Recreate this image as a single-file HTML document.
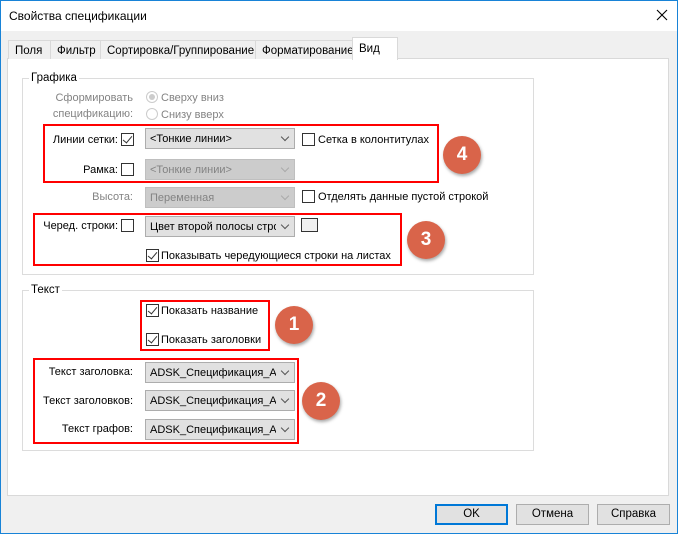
<!DOCTYPE html>
<html><head><meta charset="utf-8"><style>
*{box-sizing:border-box;margin:0;padding:0}
body{width:678px;height:534px;position:relative;overflow:hidden;background:#f0f0f0;font-family:"Liberation Sans",sans-serif;font-size:11px;line-height:16px;color:#000}
div{white-space:nowrap}
.a{position:absolute}
.r{text-align:right}
.cb{position:absolute;width:13px;height:13px;border:1px solid #333;background:#fff}
.cb.k::after{content:"";position:absolute;left:3px;top:0px;width:4px;height:8px;border:solid #333;border-width:0 1.5px 1.5px 0;transform:rotate(40deg)}
.combo{position:absolute;width:150px;height:21px;background:#e1e1e1;border:1px solid #adadad;padding:2px 0 0 4px;overflow:hidden}
.combo span{display:block;width:126px;overflow:hidden}
.combo::after{content:"";position:absolute;right:6px;top:5px;width:5px;height:5px;border:solid #555;border-width:0 1px 1px 0;transform:rotate(45deg)}
.combo.d{background:#ccc;border-color:#bfbfbf;color:#838383}
.combo.d::after{border-color:#aaa}
.red{position:absolute;border:2px solid #f00}
.circ{position:absolute;width:38px;height:38px;border-radius:50%;background:#d9644a;color:#fff;font-weight:bold;font-size:19px;text-align:center;line-height:38px;box-shadow:1px 2px 3px rgba(0,0,0,.35)}
.grp{position:absolute;border:1px solid #dcdcdc}
.gl{position:absolute;background:#fff;padding:0 2px}
.btn{position:absolute;height:21px;background:#e1e1e1;border:1px solid #adadad;text-align:center;line-height:19px;font-size:11.5px}
.tab{position:absolute;top:40px;height:19px;border:1px solid #d9d9d9;border-bottom:none;background:#f0f0f0;padding:2px 0 0 6px;font-size:11.5px}
.gray{color:#838383}
</style></head><body>
<div class="a" style="left:0;top:0;width:678px;height:31px;background:#fff"></div>
<div class="a" style="left:9px;top:8px;font-size:12px">Свойства спецификации</div>
<svg class="a" style="left:656px;top:9px" width="12" height="12"><path d="M1 1L11 11M11 1L1 11" stroke="#000" stroke-width="1.1"/></svg>
<div class="a" style="left:7px;top:58px;width:662px;height:438px;background:#fff;border:1px solid #d9d9d9"></div>
<div class="tab" style="left:8px;width:43px">Поля</div>
<div class="tab" style="left:50px;width:51px">Фильтр</div>
<div class="tab" style="left:100px;width:156px">Сортировка/Группирование</div>
<div class="tab" style="left:255px;width:98px">Форматирование</div>
<div class="tab" style="left:352px;top:37px;height:23px;width:46px;background:#fff;padding-top:3px">Вид</div>

<div class="grp" style="left:22px;top:78px;width:512px;height:197px"></div>
<div class="gl" style="left:29px;top:70px;font-size:11.5px">Графика</div>
<div class="a r gray" style="left:40px;width:93px;top:90px;line-height:16px">Сформировать<br>спецификацию:</div>
<div class="a" style="left:146px;top:91px;width:12px;height:12px;border-radius:50%;border:1px solid #ccc;background:#fff"><div style="position:absolute;left:2px;top:2px;width:6px;height:6px;border-radius:50%;background:#ccc"></div></div>
<div class="a gray" style="left:161px;top:90px">Сверху вниз</div>
<div class="a" style="left:146px;top:108px;width:12px;height:12px;border-radius:50%;border:1px solid #ccc;background:#fff"></div>
<div class="a gray" style="left:161px;top:107px">Снизу вверх</div>

<div class="a r" style="left:30px;width:88px;top:132px">Линии сетки:</div>
<div class="cb k" style="left:121px;top:133px"></div>
<div class="combo" style="left:145px;top:128px"><span>&lt;Тонкие линии&gt;</span></div>
<div class="cb" style="left:302px;top:133px"></div>
<div class="a" style="left:318px;top:132px">Сетка в колонтитулах</div>
<div class="a r" style="left:30px;width:88px;top:162px">Рамка:</div>
<div class="cb" style="left:121px;top:163px"></div>
<div class="combo d" style="left:145px;top:159px"><span>&lt;Тонкие линии&gt;</span></div>
<div class="red" style="left:43px;top:124px;width:396px;height:59px"></div>
<div class="circ" style="left:443px;top:136px">4</div>

<div class="a r gray" style="left:40px;width:93px;top:189px">Высота:</div>
<div class="combo d" style="left:145px;top:187px"><span>Переменная</span></div>
<div class="cb" style="left:302px;top:190px"></div>
<div class="a" style="left:318px;top:189px">Отделять данные пустой строкой</div>

<div class="a r" style="left:30px;width:88px;top:218px">Черед. строки:</div>
<div class="cb" style="left:121px;top:219px"></div>
<div class="combo" style="left:145px;top:216px"><span>Цвет второй полосы стро</span></div>
<div class="a" style="left:301px;top:218px;width:17px;height:14px;border:1px solid #333;background:#f0f0f0"></div>
<div class="cb k" style="left:146px;top:249px"></div>
<div class="a" style="left:161px;top:248px">Показывать чередующиеся строки на листах</div>
<div class="red" style="left:33px;top:213px;width:369px;height:53px"></div>
<div class="circ" style="left:407px;top:221px">3</div>

<div class="grp" style="left:22px;top:290px;width:512px;height:161px"></div>
<div class="gl" style="left:29px;top:282px;font-size:11.5px">Текст</div>
<div class="cb k" style="left:146px;top:304px"></div>
<div class="a" style="left:161px;top:303px">Показать название</div>
<div class="cb k" style="left:146px;top:333px"></div>
<div class="a" style="left:161px;top:332px">Показать заголовки</div>
<div class="red" style="left:140px;top:300px;width:130px;height:51px"></div>
<div class="circ" style="left:275px;top:306px">1</div>

<div class="a r" style="left:30px;width:103px;top:364px">Текст заголовка:</div>
<div class="combo" style="left:145px;top:362px"><span>ADSK_Спецификация_Ari</span></div>
<div class="a r" style="left:30px;width:103px;top:393px">Текст заголовков:</div>
<div class="combo" style="left:145px;top:390px"><span>ADSK_Спецификация_Ari</span></div>
<div class="a r" style="left:30px;width:103px;top:421px">Текст графов:</div>
<div class="combo" style="left:145px;top:419px"><span>ADSK_Спецификация_Ari</span></div>
<div class="red" style="left:33px;top:358px;width:266px;height:86px"></div>
<div class="circ" style="left:302px;top:382px">2</div>

<div class="btn" style="left:435px;top:504px;width:73px;border:2px solid #0078d7;line-height:17px">OK</div>
<div class="btn" style="left:516px;top:504px;width:73px">Отмена</div>
<div class="btn" style="left:597px;top:504px;width:73px">Справка</div>
<div class="a" style="left:0;top:0;width:678px;height:534px;border:1px solid #1883d7"></div>
</body></html>
